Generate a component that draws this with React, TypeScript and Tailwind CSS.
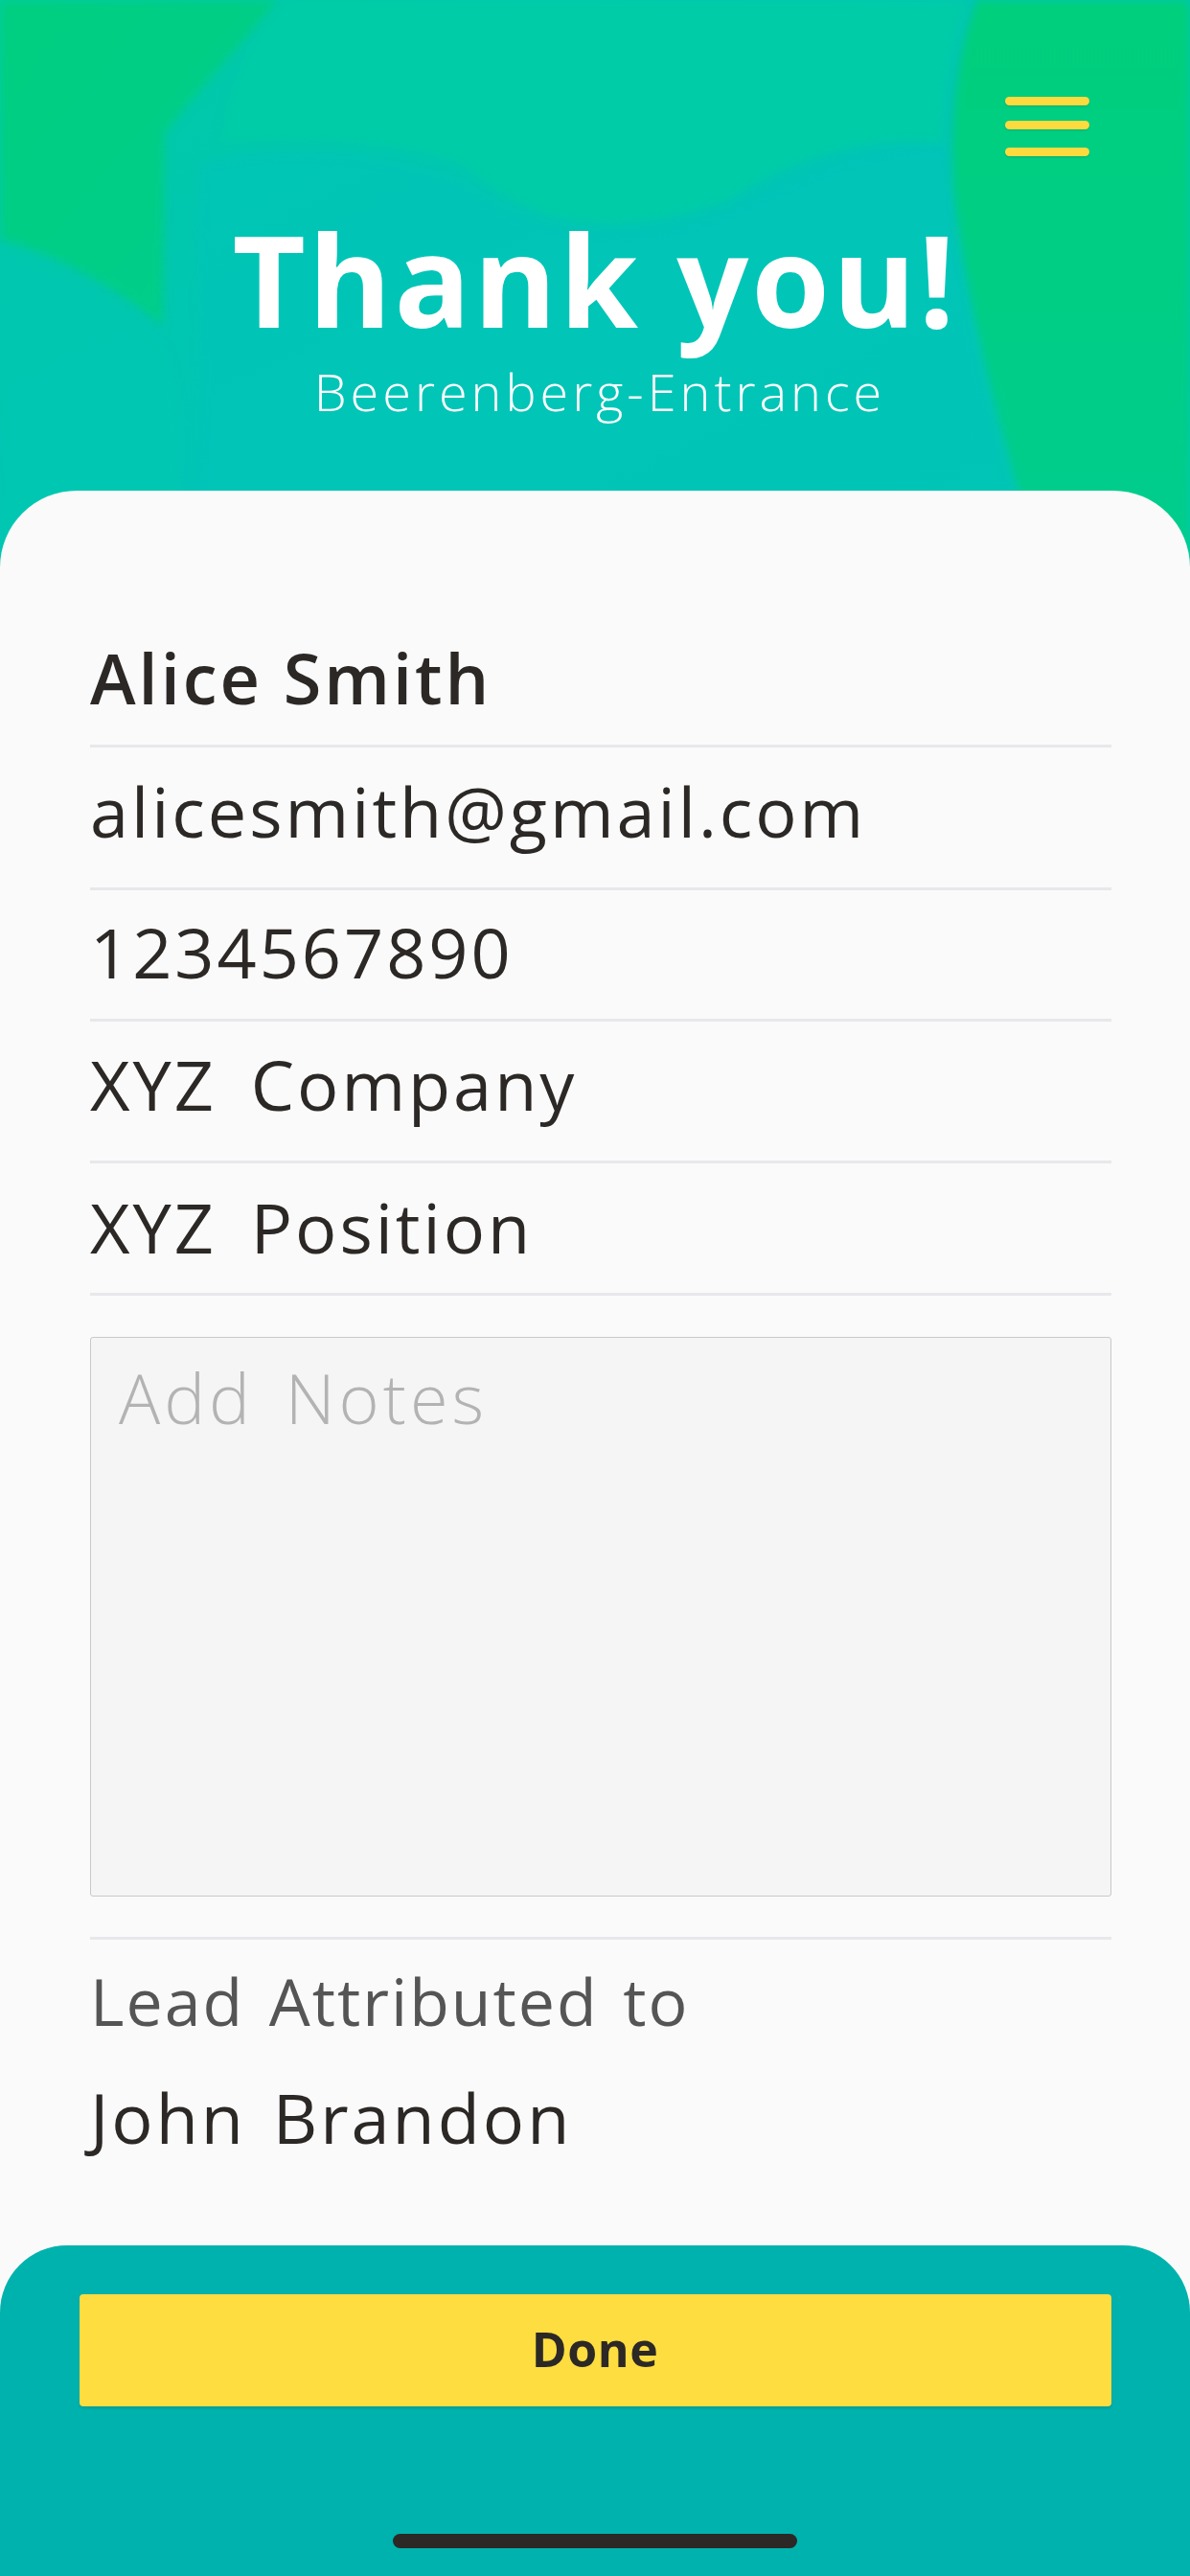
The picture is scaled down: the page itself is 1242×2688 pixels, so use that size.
import React from "react";

const font = { fontFamily: '"Open Sans", "Noto Sans", sans-serif' };

function HeaderBackground() {
  return (
    <svg
      className="absolute left-0 top-0"
      width="1242"
      height="620"
      viewBox="0 0 1242 620"
      aria-hidden="true"
    >
      <defs>
        <linearGradient id="base" x1="0" y1="0" x2="1" y2="1">
          <stop offset="0" stopColor="#00cba6" />
          <stop offset="0.5" stopColor="#00c5b6" />
          <stop offset="1" stopColor="#00c9ae" />
        </linearGradient>
        <linearGradient id="tl" x1="0" y1="0" x2="1" y2="1">
          <stop offset="0" stopColor="#00cf80" />
          <stop offset="1" stopColor="#00cd8c" />
        </linearGradient>
        <linearGradient id="rt" x1="0" y1="0" x2="0" y2="1">
          <stop offset="0" stopColor="#00cf7c" />
          <stop offset="1" stopColor="#00cc8e" />
        </linearGradient>
        <filter id="soft" x="-10%" y="-10%" width="120%" height="120%">
          <feGaussianBlur stdDeviation="5" />
        </filter>
      </defs>
      <rect width="1242" height="620" fill="url(#base)" />
      <g filter="url(#soft)">
        <path
          d="M300 0 H1010 C990 60 985 110 985 150 C900 140 820 170 760 210 C640 250 560 240 480 170 C420 150 330 140 230 150 C240 90 260 40 300 0 Z"
          fill="#00cca6"
          opacity="0.9"
        />
        <path
          d="M0 0 H290 C250 50 200 100 172 140 L170 340 C120 300 60 265 0 250 Z"
          fill="url(#tl)"
        />
        <path
          d="M480 190 C560 250 660 260 760 220 C840 180 920 150 990 150 C1000 300 1030 420 1090 620 H200 C220 480 200 300 210 170 C300 150 400 160 480 190 Z"
          fill="#00c4b8"
          opacity="0.7"
        />
        <path
          d="M1020 0 H1242 V620 H1095 C1050 470 1010 330 995 200 C990 120 1000 50 1020 0 Z"
          fill="url(#rt)"
        />
        <path
          d="M0 260 C60 280 120 320 170 360 C200 430 190 520 170 620 H0 Z"
          fill="#00c7b0"
          opacity="0.7"
        />
      </g>
    </svg>
  );
}

function Row({
  children,
  pt,
  pb,
  bold,
}: {
  children: React.ReactNode;
  pt: string;
  pb: string;
  bold?: boolean;
}) {
  return (
    <div className={`border-b-[3px] border-[#e8e8ec] ${pt} ${pb}`}>
      <div
        className={`text-[72px] leading-[72px] tracking-[3px] text-[#2b2826] whitespace-nowrap ${
          bold ? "font-semibold" : "font-normal [word-spacing:14px]"
        }`}
      >
        {children}
      </div>
    </div>
  );
}

export default function App() {
  return (
    <div
      className="relative w-[1242px] h-[2688px] overflow-hidden bg-[#fafafa] flex flex-col"
      style={font}
    >
      <HeaderBackground />

      {/* Header */}
      <div className="relative h-[512px] shrink-0 flex flex-col items-center">
        <div className="absolute top-[101px] right-[105px] flex flex-col">
          <span className="block w-[88px] h-[9px] rounded-full bg-[#fddb3e] shadow-[0_1px_2px_rgba(0,0,0,0.15)]" />
          <span className="block w-[88px] h-[9px] rounded-full bg-[#fddb3e] mt-[16px] shadow-[0_1px_2px_rgba(0,0,0,0.15)]" />
          <span className="block w-[88px] h-[9px] rounded-full bg-[#fddb3e] mt-[19px] shadow-[0_1px_2px_rgba(0,0,0,0.15)]" />
        </div>
        <h1 className="mt-[225px] text-[132px] leading-[132px] font-bold text-white tracking-[3px]">
          Thank you!
        </h1>
        <p className="mt-[26px] ml-[10px] text-[54px] leading-[50px] font-light text-white tracking-[4px]">
          Beerenberg-Entrance
        </p>
      </div>

      {/* Card */}
      <div className="relative flex-1 bg-[#fafafa] rounded-t-[80px]">
        <div className="ml-[94px] w-[1066px] flex flex-col">
          <Row pt="pt-[159px]" pb="pb-[34px]" bold>
            Alice Smith
          </Row>
          <Row pt="pt-[30px]" pb="pb-[44px]">
            alicesmith@gmail.com
          </Row>
          <Row pt="pt-[28px]" pb="pb-[34px]">
            1234567890
          </Row>
          <Row pt="pt-[29px]" pb="pb-[44px]">
            XYZ Company
          </Row>
          <Row pt="pt-[30px]" pb="pb-[33px]">
            XYZ Position
          </Row>

          <div className="mt-[43px] h-[584px] border border-[#c9c9c9] rounded-[3px] bg-[#f5f5f5] pl-[29px] pt-[26px]">
            <div className="text-[72px] leading-[72px] font-light tracking-[4px] [word-spacing:10px] text-[#b3b3b3]">
              Add Notes
            </div>
          </div>

          <div className="mt-[42px] h-[3px] bg-[#e8e8ec]" />

          <div className="mt-[30px] text-[68px] leading-[68px] font-normal tracking-[2px] [word-spacing:6px] text-[#555555]">
            Lead Attributed to
          </div>
          <div className="mt-[51px] text-[72px] leading-[72px] font-normal tracking-[3px] [word-spacing:6px] text-[#2b2826]">
            John Brandon
          </div>
        </div>
      </div>

      {/* Footer */}
      <div className="relative h-[345px] shrink-0 bg-[#00b2ad] rounded-t-[70px] flex flex-col items-center">
        <button className="mt-[51px] w-[1077px] h-[117px] rounded-[4px] bg-[#fddd40] shadow-[0_2px_3px_rgba(0,0,0,0.12)] flex items-center justify-center">
          <span className="text-[50px] leading-[50px] font-bold text-[#2b2826] tracking-[0.5px] -mt-[4px]">
            Done
          </span>
        </button>
        <div className="mt-[133px] w-[422px] h-[15px] rounded-full bg-[#2b2826]" />
      </div>
    </div>
  );
}
